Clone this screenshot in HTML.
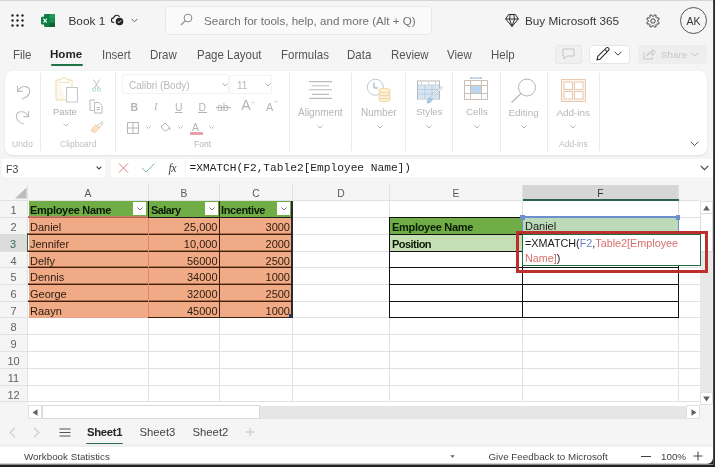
<!DOCTYPE html>
<html><head><meta charset="utf-8">
<style>
*{box-sizing:border-box;margin:0;padding:0}
html,body{width:715px;height:467px;overflow:hidden;background:#f5f5f5;font-family:"Liberation Sans",sans-serif;color:#242424}
.a{position:absolute}
.t{position:absolute;white-space:nowrap;line-height:1}
.tab{font-size:12.1px;color:#555;top:48.6px;transform:scaleX(0.95);transform-origin:0 0}
.rl{font-size:10px;color:#a6a6a6;text-align:center}
.sep{position:absolute;width:1px;background:#ebebeb;top:73px;height:78px}
.ch{position:absolute;font-size:10.3px;color:#5a5a5a;top:189px;text-align:center;line-height:1}
.rh{position:absolute;left:0;width:27px;text-align:center;font-size:11px;color:#616161;line-height:1}
.c{position:absolute;font-size:11px;line-height:1;white-space:nowrap;color:#1a1a1a}
.b{font-weight:bold;letter-spacing:-0.25px}
</style></head><body><div id="root" style="position:absolute;left:0;top:0;width:715px;height:467px;will-change:transform">
<!-- top border -->
<div class="a" style="left:0;top:0;width:715px;height:1px;background:#d6d6d6"></div>

<!-- ===== title bar ===== -->
<!-- waffle -->
<svg class="a" style="left:11px;top:14px" width="14" height="13" viewBox="0 0 14 13">
<g fill="#242424"><circle cx="1.5" cy="1.5" r="1.2"/><circle cx="6.5" cy="1.5" r="1.2"/><circle cx="11.5" cy="1.5" r="1.2"/>
<circle cx="1.5" cy="6.5" r="1.2"/><circle cx="6.5" cy="6.5" r="1.2"/><circle cx="11.5" cy="6.5" r="1.2"/>
<circle cx="1.5" cy="11.5" r="1.2"/><circle cx="6.5" cy="11.5" r="1.2"/><circle cx="11.5" cy="11.5" r="1.2"/></g></svg>
<!-- excel logo -->
<svg class="a" style="left:41px;top:14px" width="14" height="13" viewBox="0 0 14 13">
<rect x="3" y="0" width="11" height="13" rx="1.2" fill="#137a43"/>
<rect x="8.5" y="0" width="5.5" height="13" rx="1" fill="#1f9a58"/>
<rect x="8.5" y="4.3" width="5.5" height="4.4" fill="#178a4c"/>
<rect x="8.5" y="8.7" width="5.5" height="4.3" fill="#0e5f33"/>
<rect x="0" y="2.8" width="8.5" height="7.6" rx="1" fill="#107c41"/>
<path d="M2.4 4.6l3.4 4 M5.8 4.6l-3.4 4" stroke="#e8fff0" stroke-width="1.1"/>
</svg>
<div class="t" style="left:68.5px;top:16px;font-size:11.8px;color:#333">Book 1</div>
<!-- cloud check -->
<svg class="a" style="left:111px;top:13px" width="13" height="13" viewBox="0 0 13 13">
<path d="M3.2 9.5H2.8A2.3 2.3 0 0 1 2.6 4.9 3.2 3.2 0 0 1 8.6 4" fill="none" stroke="#242424" stroke-width="1.2"/>
<circle cx="8.5" cy="8.5" r="3.8" fill="#242424"/>
<path d="M6.8 8.6l1.2 1.1 2.1-2.3" fill="none" stroke="#fff" stroke-width="1"/>
</svg>
<svg class="a" style="left:131px;top:18px" width="7" height="5" viewBox="0 0 7 5"><path d="M0.5 0.8l3 3 3-3" fill="none" stroke="#616161" stroke-width="1"/></svg>
<!-- search -->
<div class="a" style="left:166px;top:7px;width:265px;height:27px;background:#fafafa;border-radius:4px;box-shadow:0 0 0 1px #e8e8e8"></div>
<svg class="a" style="left:180px;top:13px" width="13" height="13" viewBox="0 0 13 13"><circle cx="8" cy="5" r="3.9" fill="none" stroke="#8a8a8a" stroke-width="1"/><path d="M5.2 7.8L1 12" stroke="#8a8a8a" stroke-width="1.1"/></svg>
<div class="t" style="left:204px;top:15px;font-size:11.6px;color:#707070">Search for tools, help, and more (Alt + Q)</div>
<!-- diamond -->
<svg class="a" style="left:504.5px;top:14px" width="14" height="13" viewBox="0 0 14 13"><path d="M3.6 0.5H10.4L13.4 5L7 12.4L0.6 5Z M0.6 5H13.4 M5.3 0.5L4.5 5L7 12.4L9.5 5L8.7 0.5" fill="none" stroke="#2a2a2a" stroke-width="1" stroke-linejoin="round"/></svg>
<div class="t" style="left:525px;top:15px;font-size:11.75px;color:#383838">Buy Microsoft 365</div>
<!-- gear -->
<svg class="a" style="left:646px;top:13.5px" width="14" height="14" viewBox="0 0 14 14"><path d="M8.64 0.81 L10.21 1.47 L9.91 3.31 L10.69 4.09 L12.53 3.79 L13.19 5.36 L11.67 6.45 L11.67 7.55 L13.19 8.64 L12.53 10.21 L10.69 9.91 L9.91 10.69 L10.21 12.53 L8.64 13.19 L7.55 11.67 L6.45 11.67 L5.36 13.19 L3.79 12.53 L4.09 10.69 L3.31 9.91 L1.47 10.21 L0.81 8.64 L2.33 7.55 L2.33 6.45 L0.81 5.36 L1.47 3.79 L3.31 4.09 L4.09 3.31 L3.79 1.47 L5.36 0.81 L6.45 2.33 L7.55 2.33Z" fill="none" stroke="#3a3a3a" stroke-width="0.95" stroke-linejoin="round"/><circle cx="7" cy="7" r="2.2" fill="none" stroke="#3a3a3a" stroke-width="0.95"/></svg>
<!-- avatar -->
<div class="a" style="left:680px;top:7px;width:27px;height:27px;border-radius:50%;border:1px solid #555;background:#f5f5f5"></div>
<div class="t" style="left:680px;top:16px;width:27px;text-align:center;font-size:10.5px;color:#333">AK</div>

<!-- ===== tabs ===== -->
<div class="t tab" style="left:13px">File</div>
<div class="t tab" style="left:50px;top:48.2px;font-weight:bold;color:#242424;transform:none;font-size:11.6px">Home</div>
<div class="a" style="left:50.5px;top:63.5px;width:32px;height:2px;background:#217346;border-radius:1px"></div>
<div class="t tab" style="left:102px">Insert</div>
<div class="t tab" style="left:150px">Draw</div>
<div class="t tab" style="left:197px">Page Layout</div>
<div class="t tab" style="left:281px">Formulas</div>
<div class="t tab" style="left:347px">Data</div>
<div class="t tab" style="left:391px">Review</div>
<div class="t tab" style="left:447px">View</div>
<div class="t tab" style="left:491px">Help</div>
<!-- comment btn -->
<div class="a" style="left:554.5px;top:45px;width:27px;height:19px;border:1px solid #e6e6e6;border-radius:3px;background:#f0f0f0"></div>
<svg class="a" style="left:562px;top:48px" width="13" height="12" viewBox="0 0 13 12"><path d="M1 1h11v7H5l-3 3V8H1z" fill="none" stroke="#c4c4c4" stroke-width="1"/></svg>
<!-- pen btn -->
<div class="a" style="left:589px;top:45px;width:41px;height:19px;border:1px solid #e6e6e6;border-radius:3px;background:#fff"></div>
<svg class="a" style="left:596px;top:47px" width="14" height="14" viewBox="0 0 14 14"><path d="M1 13l.8-3.6L10.2 1a1.5 1.5 0 0 1 2.3 2.3L4.3 11.9z M8.8 2.4l2.3 2.3" fill="none" stroke="#242424" stroke-width="1.05" stroke-linejoin="round"/></svg>
<svg class="a" style="left:614px;top:51px" width="8" height="5" viewBox="0 0 8 5"><path d="M0.5 0.8l3.5 3.3 3.5-3.3" fill="none" stroke="#424242" stroke-width="1"/></svg>
<!-- share btn -->
<div class="a" style="left:638px;top:45px;width:69px;height:19px;border-radius:3px;background:#eeeeee"></div>
<svg class="a" style="left:643px;top:47px" width="13" height="13" viewBox="0 0 13 13"><path d="M1 5v7h8.5V10 M4 9.2c.3-3 2.4-4.7 5.4-4.7V2.2l3 3.2-3 3.2V6.2c-2.4 0-4.3.9-5.4 3z" fill="none" stroke="#c8c8c8" stroke-width="1"/></svg>
<div class="t" style="left:661px;top:49.5px;font-size:9.8px;color:#c6c6c6">Share</div>
<svg class="a" style="left:690.5px;top:51.5px" width="8" height="5" viewBox="0 0 8 5"><path d="M0.5 0.8l3.5 3.3 3.5-3.3" fill="none" stroke="#c6c6c6" stroke-width="1"/></svg>

<!-- ===== ribbon card ===== -->
<div class="a" style="left:5px;top:71px;width:702px;height:84px;background:#fff;border-radius:7px;box-shadow:0 0 1.5px rgba(0,0,0,0.08),0 1px 2px rgba(0,0,0,0.07)"></div>
<!-- Undo group -->
<svg class="a" style="left:8px;top:78px" width="30" height="52" viewBox="0 0 30 52">
<path d="M9.5 8.2V13.4H14.2 M9.6 13.3C11.5 9.8 14.8 8.2 17.8 8.6 21 9.1 22.4 12 21.4 15 20.6 17.3 18 19.6 14.2 21" fill="none" stroke="#bdbdbd" stroke-width="1.1" stroke-linecap="round" stroke-linejoin="round"/>
<path d="M20.6 33.4V38.6H15.9 M20.5 38.5C18.6 35 15.3 33.4 12.3 33.8 9.1 34.3 7.7 37.2 8.7 40.2 9.5 42.5 12.1 44.8 15.4 45.9" fill="none" stroke="#bdbdbd" stroke-width="1.1" stroke-linecap="round" stroke-linejoin="round"/>
</svg>
<div class="t" style="left:12px;top:139.5px;font-size:8.7px;color:#c0c0c0">Undo</div>
<div class="sep" style="left:40px"></div>
<!-- Clipboard -->
<svg class="a" style="left:55px;top:77px" width="24" height="26" viewBox="0 0 24 26">
<path d="M4 2.5h2.5a2.5 2 0 0 1 5 0H14v3H4z" fill="none" stroke="#f2dfb8" stroke-width="1"/>
<path d="M4 3H1v20h10" fill="#fdf8ee" stroke="#f0dcb0" stroke-width="1"/>
<path d="M14 3h3v7" fill="none" stroke="#f0dcb0" stroke-width="1"/>
<rect x="11.5" y="10.5" width="11" height="14.5" fill="#fff" stroke="#c6c6c6" stroke-width="1"/>
</svg>
<div class="t" style="left:53px;top:108px;font-size:9.3px;color:#acacac">Paste</div>
<svg class="a" style="left:63px;top:123px" width="6" height="4" viewBox="0 0 6 4"><path d="M0.5 0.5l2.5 2.5 2.5-2.5" fill="none" stroke="#bdbdbd" stroke-width="1"/></svg>
<svg class="a" style="left:92px;top:79px" width="9" height="13" viewBox="0 0 9 13"><path d="M1.5 0.5l5 8.5 M7.5 0.5l-5 8.5" stroke="#c0c0c0" stroke-width="1" fill="none"/><circle cx="2" cy="10.5" r="1.7" fill="none" stroke="#a9cfd8" stroke-width="1"/><circle cx="7" cy="10.5" r="1.7" fill="none" stroke="#a9cfd8" stroke-width="1"/></svg>
<svg class="a" style="left:89px;top:99px" width="15" height="15" viewBox="0 0 15 15"><path d="M4.5 11.5h-3.5V1h4.5v1" fill="none" stroke="#b9b9b9" stroke-width="1"/><path d="M5.5 3.5h4.5l3 3v7.5H5.5z M7.5 8.5h3.5 M7.5 10.5h3.5" fill="none" stroke="#b9b9b9" stroke-width="1"/></svg>
<svg class="a" style="left:90px;top:121px" width="14" height="12" viewBox="0 0 14 12"><path d="M7 5l5-4.2 1.2 1.2L9 7" fill="none" stroke="#c4c4c4" stroke-width="1"/><path d="M1 9.5L5.5 4l3.5 3.2-4 4.3z" fill="#fbe3c8" stroke="#f0c79a" stroke-width="1"/></svg>
<div class="t" style="left:60px;top:139.5px;font-size:8.5px;color:#c0c0c0">Clipboard</div>
<div class="sep" style="left:115px"></div>
<!-- Font -->
<div class="a" style="left:122px;top:74px;width:107px;height:20px;border:1px solid #f3f3f3;border-radius:2px"></div>
<div class="t" style="left:129px;top:81px;font-size:10px;color:#b8b8b8">Calibri (Body)</div>
<svg class="a" style="left:222px;top:83px" width="6" height="4" viewBox="0 0 6 4"><path d="M0.5 0.5l2.5 2.5 2.5-2.5" fill="none" stroke="#b0b0b0" stroke-width="1"/></svg>
<div class="a" style="left:229px;top:75px;width:43px;height:19px;border:1px solid #f3f3f3;border-radius:2px"></div>
<div class="t" style="left:237px;top:81px;font-size:10px;color:#b8b8b8">11</div>
<svg class="a" style="left:265px;top:83px" width="6" height="4" viewBox="0 0 6 4"><path d="M0.5 0.5l2.5 2.5 2.5-2.5" fill="none" stroke="#b0b0b0" stroke-width="1"/></svg>
<div class="t" style="left:130.5px;top:101.5px;font-size:10.5px;color:#b5b5b5;font-weight:bold">B</div>
<div class="t" style="left:154px;top:101.5px;font-size:10.5px;color:#b5b5b5;font-style:italic;font-family:'Liberation Serif',serif">I</div>
<div class="t" style="left:175px;top:101.5px;font-size:10.5px;color:#b5b5b5;text-decoration:underline">U</div>
<div class="t" style="left:198.5px;top:101.5px;font-size:10.5px;color:#b5b5b5">D</div>
<div class="a" style="left:198px;top:111.5px;width:9px;height:1px;background:#b5b5b5"></div>
<div class="t" style="left:217px;top:101.5px;font-size:10.5px;color:#b5b5b5">ab</div>
<div class="a" style="left:216px;top:106.5px;width:15px;height:1px;background:#b5b5b5"></div>
<div class="t" style="left:241.3px;top:98.3px;font-size:14px;color:#b5b5b5">A</div>
<svg class="a" style="left:251px;top:100.5px" width="4" height="3" viewBox="0 0 4 3"><path d="M0.3 2.5L2 0.6l1.7 1.9" fill="none" stroke="#c4c4c4" stroke-width="0.8"/></svg>
<div class="t" style="left:266px;top:101.5px;font-size:11px;color:#b5b5b5">A</div>
<svg class="a" style="left:273.5px;top:100px" width="4" height="3" viewBox="0 0 4 3"><path d="M0.3 0.5L2 2.4l1.7-1.9" fill="none" stroke="#c4c4c4" stroke-width="0.8"/></svg>
<svg class="a" style="left:127px;top:122px" width="12" height="12" viewBox="0 0 12 12"><path d="M0.5 0.5h11v11h-11z M6 0.5v11 M0.5 6h11" fill="none" stroke="#b5b5b5" stroke-width="1"/></svg>
<svg class="a" style="left:146px;top:126px" width="5" height="3" viewBox="0 0 5 3"><path d="M0.4 0.4l2.1 2.1 2.1-2.1" fill="none" stroke="#b5b5b5" stroke-width="0.9"/></svg>
<svg class="a" style="left:160px;top:122px" width="11" height="10" viewBox="0 0 11 10"><path d="M1 5l4-4 4.5 4.5-3 3.3h-2z M9 5.2c.8 1.2 1.2 2.2 1.2 3" fill="none" stroke="#b5b5b5" stroke-width="1"/></svg>
<svg class="a" style="left:177.5px;top:126px" width="5" height="3" viewBox="0 0 5 3"><path d="M0.4 0.4l2.1 2.1 2.1-2.1" fill="none" stroke="#b5b5b5" stroke-width="0.9"/></svg>
<div class="t" style="left:192px;top:121.5px;font-size:10.5px;color:#b5b5b5">A</div>
<div class="a" style="left:190px;top:132px;width:13px;height:2.5px;background:#e7a3a8"></div>
<svg class="a" style="left:209px;top:126px" width="5" height="3" viewBox="0 0 5 3"><path d="M0.4 0.4l2.1 2.1 2.1-2.1" fill="none" stroke="#b5b5b5" stroke-width="0.9"/></svg>
<div class="t" style="left:194px;top:140px;font-size:8.5px;color:#b3b3b3">Font</div>
<div class="sep" style="left:289px"></div>
<!-- Alignment -->
<svg class="a" style="left:308px;top:80px" width="25" height="20" viewBox="0 0 25 20"><path d="M1 1.6h23 M4 5.7h17 M1 9.7h23 M4 14.4h17 M1 18.4h23" stroke="#bababa" stroke-width="1.1"/></svg>
<div class="t" style="left:298px;top:107.7px;font-size:10px;color:#b6b6b6">Alignment</div>
<svg class="a" style="left:317px;top:124.5px" width="6" height="4" viewBox="0 0 6 4"><path d="M0.5 0.5l2.5 2.5 2.5-2.5" fill="none" stroke="#b5b5b5" stroke-width="1"/></svg>
<div class="sep" style="left:351px"></div>
<!-- Number -->
<svg class="a" style="left:366px;top:78px" width="26" height="25" viewBox="0 0 26 25">
<circle cx="9.3" cy="9.2" r="8" fill="#fff" stroke="#b6cdd8" stroke-width="1"/>
<path d="M8 4.5v5.5h4" fill="none" stroke="#9a9a9a" stroke-width="1"/>
<g fill="#fdf1d6" stroke="#efd39d" stroke-width="1"><ellipse cx="18.5" cy="21.5" rx="5.8" ry="2.2"/><ellipse cx="18.5" cy="18.5" rx="5.8" ry="2.2"/><ellipse cx="18.5" cy="15.5" rx="5.8" ry="2.2"/><ellipse cx="18.5" cy="12.5" rx="5.8" ry="2.2"/></g>
</svg>
<div class="t" style="left:361px;top:107.7px;font-size:10px;color:#b6b6b6">Number</div>
<svg class="a" style="left:376.5px;top:124.5px" width="6" height="4" viewBox="0 0 6 4"><path d="M0.5 0.5l2.5 2.5 2.5-2.5" fill="none" stroke="#b5b5b5" stroke-width="1"/></svg>
<div class="sep" style="left:405px"></div>
<!-- Styles -->
<svg class="a" style="left:416px;top:80px" width="27" height="24" viewBox="0 0 27 24">
<rect x="1.5" y="1" width="22" height="18" fill="#fff" stroke="#b8b8b8" stroke-width="1"/>
<rect x="2" y="5" width="21" height="13.5" fill="#d6e6f5"/>
<path d="M1.5 5h22 M1.5 9.5h22 M1.5 14h22 M9 5v14 M16 5v14" stroke="#b8c8d8" stroke-width="0.8"/>
<path d="M5 3h1 M12 3h1 M19 3h1" stroke="#9a9a9a" stroke-width="1"/>
<path d="M25.5 7.5L15 18" stroke="#c8c8c8" stroke-width="2.4" stroke-linecap="round"/>
<path d="M25.5 7.5L15 18" stroke="#fff" stroke-width="1" stroke-linecap="round"/>
<path d="M14 17l2.5 2.2c-.5 2.3-2.5 3.6-5.5 3.8 .5-2.6 1.2-5 3-6z" fill="#a9cbe6" stroke="#9cbfdc" stroke-width="0.8"/>
</svg>
<div class="t" style="left:416px;top:107.2px;font-size:9.8px;color:#b6b6b6">Styles</div>
<svg class="a" style="left:426px;top:124.5px" width="6" height="4" viewBox="0 0 6 4"><path d="M0.5 0.5l2.5 2.5 2.5-2.5" fill="none" stroke="#b5b5b5" stroke-width="1"/></svg>
<div class="sep" style="left:452px"></div>
<!-- Cells -->
<svg class="a" style="left:464px;top:77px" width="24" height="23" viewBox="0 0 24 23">
<path d="M7 1h10 M7 0v2 M17 0v2" stroke="#8fb0d0" stroke-width="1"/>
<rect x="0.5" y="3.5" width="23" height="19" fill="#fff" stroke="#c9c0b6" stroke-width="1"/>
<rect x="7" y="8.5" width="10" height="8" fill="#bcd6ef"/>
<path d="M0.5 8.5h23 M0.5 16.5h23 M6.5 3.5v19 M17.5 3.5v19" stroke="#c9c0b6" stroke-width="1"/>
</svg>
<div class="t" style="left:466px;top:107.2px;font-size:9.8px;color:#b6b6b6">Cells</div>
<svg class="a" style="left:474px;top:124.5px" width="6" height="4" viewBox="0 0 6 4"><path d="M0.5 0.5l2.5 2.5 2.5-2.5" fill="none" stroke="#b5b5b5" stroke-width="1"/></svg>
<div class="sep" style="left:500px"></div>
<!-- Editing -->
<svg class="a" style="left:510px;top:78px" width="27" height="26" viewBox="0 0 27 26"><circle cx="17" cy="9.5" r="8.5" fill="none" stroke="#b5b5b5" stroke-width="1"/><path d="M11 15.5L1.5 24.5" stroke="#b5b5b5" stroke-width="1.1"/></svg>
<div class="t" style="left:508.5px;top:107.7px;font-size:9.9px;color:#b6b6b6">Editing</div>
<svg class="a" style="left:521px;top:124.5px" width="6" height="4" viewBox="0 0 6 4"><path d="M0.5 0.5l2.5 2.5 2.5-2.5" fill="none" stroke="#b5b5b5" stroke-width="1"/></svg>
<div class="sep" style="left:547px"></div>
<!-- Add-ins -->
<svg class="a" style="left:561px;top:79px" width="25" height="23" viewBox="0 0 25 23"><rect x="0.5" y="0.5" width="24" height="22" fill="#fdf5ee" stroke="#e8c9b0" stroke-width="1"/><rect x="3" y="3" width="8.5" height="7.5" fill="#fff" stroke="#e8c9b0" stroke-width="1"/><rect x="13.5" y="3" width="8.5" height="7.5" fill="#fff" stroke="#e8c9b0" stroke-width="1"/><rect x="3" y="12.5" width="8.5" height="7.5" fill="#fff" stroke="#e8c9b0" stroke-width="1"/><rect x="13.5" y="12.5" width="8.5" height="7.5" fill="#fff" stroke="#e8c9b0" stroke-width="1"/></svg>
<div class="t" style="left:556.5px;top:107.7px;font-size:9.9px;color:#b6b6b6">Add-ins</div>
<svg class="a" style="left:570px;top:124.5px" width="6" height="4" viewBox="0 0 6 4"><path d="M0.5 0.5l2.5 2.5 2.5-2.5" fill="none" stroke="#b5b5b5" stroke-width="1"/></svg>
<div class="t" style="left:559px;top:139.5px;font-size:8.5px;color:#c0c0c0">Add-ins</div>
<div class="sep" style="left:599px"></div>
<svg class="a" style="left:690px;top:140.5px" width="9" height="6" viewBox="0 0 9 6"><path d="M0.7 0.8l3.8 3.8 3.8-3.8" fill="none" stroke="#4a4a4a" stroke-width="1"/></svg>


<!-- ===== formula bar ===== -->


<!-- ===== grid ===== -->
<!--GRID-->
<div class="a" style="left:2px;top:159px;width:103px;height:18px;background:#fff;border-radius:2px"></div>
<div class="t" style="left:6px;top:164px;font-size:10.5px;color:#424242">F3</div>
<svg class="a" style="left:96px;top:166px" width="6" height="4" viewBox="0 0 6 4"><path d="M0.6 0.6l2.4 2.4 2.4-2.4" fill="none" stroke="#424242" stroke-width="1.1"/></svg>
<div class="a" style="left:111px;top:159px;width:74px;height:18px;background:#fff;border-radius:2px"></div>
<svg class="a" style="left:118px;top:163px" width="11" height="10" viewBox="0 0 11 10"><path d="M1 0.5l9 9 M10 0.5l-9 9" stroke="#df7b80" stroke-width="1"/></svg>
<svg class="a" style="left:141px;top:163px" width="14" height="10" viewBox="0 0 14 10"><path d="M0.8 4.8l4.2 4.2 8.4-8.4" fill="none" stroke="#7cb988" stroke-width="1"/></svg>
<div class="t" style="left:168.5px;top:162px;font-size:12px;color:#424242;font-family:'Liberation Serif',serif;font-style:italic;letter-spacing:-0.5px">fx</div>
<div class="a" style="left:186px;top:159px;width:529px;height:18px;background:#fff;"></div>
<div class="t" style="left:189.5px;top:163px;font-size:11.2px;color:#1f1f1f;font-family:'Liberation Mono',monospace">=XMATCH(F2,Table2[Employee Name])</div>
<svg class="a" style="left:699.5px;top:165.3px" width="9" height="6" viewBox="0 0 9 6"><path d="M0.7 0.8l3.8 3.8 3.8-3.8" fill="none" stroke="#424242" stroke-width="1.1"/></svg>
<div class="a" style="left:28px;top:201px;width:672px;height:205px;background:#fff;"></div>
<div class="a" style="left:0px;top:200px;width:700px;height:1px;background:#e1e1e1;"></div>
<div class="a" style="left:0px;top:217px;width:700px;height:1px;background:#e1e1e1;"></div>
<div class="a" style="left:0px;top:234px;width:700px;height:1px;background:#e1e1e1;"></div>
<div class="a" style="left:0px;top:251px;width:700px;height:1px;background:#e1e1e1;"></div>
<div class="a" style="left:0px;top:267px;width:700px;height:1px;background:#e1e1e1;"></div>
<div class="a" style="left:0px;top:284px;width:700px;height:1px;background:#e1e1e1;"></div>
<div class="a" style="left:0px;top:301px;width:700px;height:1px;background:#e1e1e1;"></div>
<div class="a" style="left:0px;top:317px;width:700px;height:1px;background:#e1e1e1;"></div>
<div class="a" style="left:0px;top:334px;width:700px;height:1px;background:#e1e1e1;"></div>
<div class="a" style="left:0px;top:351px;width:700px;height:1px;background:#e1e1e1;"></div>
<div class="a" style="left:0px;top:368px;width:700px;height:1px;background:#e1e1e1;"></div>
<div class="a" style="left:0px;top:385px;width:700px;height:1px;background:#e1e1e1;"></div>
<div class="a" style="left:0px;top:401px;width:700px;height:1px;background:#e1e1e1;"></div>
<div class="a" style="left:27px;top:185px;width:1px;height:216px;background:#e1e1e1;"></div>
<div class="a" style="left:148px;top:185px;width:1px;height:216px;background:#e1e1e1;"></div>
<div class="a" style="left:219px;top:185px;width:1px;height:216px;background:#e1e1e1;"></div>
<div class="a" style="left:292px;top:185px;width:1px;height:216px;background:#e1e1e1;"></div>
<div class="a" style="left:389px;top:185px;width:1px;height:216px;background:#e1e1e1;"></div>
<div class="a" style="left:522px;top:185px;width:1px;height:216px;background:#e1e1e1;"></div>
<div class="a" style="left:678px;top:185px;width:1px;height:216px;background:#e1e1e1;"></div>
<div class="ch" style="left:28px;width:120px">A</div>
<div class="ch" style="left:149px;width:70px">B</div>
<div class="ch" style="left:220px;width:72px">C</div>
<div class="ch" style="left:293px;width:96px">D</div>
<div class="ch" style="left:390px;width:132px">E</div>
<div class="ch" style="left:523px;width:155px">F</div>
<svg class="a" style="left:14px;top:187px" width="13" height="12" viewBox="0 0 13 12"><path d="M12.5 0.5V11.5H1z" fill="#bdbdbd"/></svg>
<div class="rh" style="top:205.2px">1</div>
<div class="rh" style="top:222.2px">2</div>
<div class="rh" style="top:239.2px">3</div>
<div class="rh" style="top:256.2px">4</div>
<div class="rh" style="top:272.2px">5</div>
<div class="rh" style="top:289.2px">6</div>
<div class="rh" style="top:306.2px">7</div>
<div class="rh" style="top:322.2px">8</div>
<div class="rh" style="top:339.2px">9</div>
<div class="rh" style="top:356.2px">10</div>
<div class="rh" style="top:373.2px">11</div>
<div class="rh" style="top:390.2px">12</div>
<div class="a" style="left:523px;top:185px;width:155px;height:14px;background:#d6d6d6;"></div>
<div class="a" style="left:523px;top:198.5px;width:156px;height:2.2px;background:#2e6249;"></div>
<div class="ch" style="left:523px;width:155px;color:#3a3a3a">F</div>
<div class="a" style="left:0px;top:234px;width:26.5px;height:17px;background:#dcdcdc;"></div>
<div class="a" style="left:26.5px;top:233px;width:1.6px;height:19px;background:#2e6b45;"></div>
<div class="rh" style="top:239.2px;color:#3d6b52;width:26px">3</div>
<div class="a" style="left:29px;top:201px;width:263px;height:16px;background:#70ad47;"></div>
<div class="a" style="left:29px;top:217px;width:263px;height:100px;background:#f0ab86;"></div>
<div class="a" style="left:28px;top:233px;width:264px;height:1px;background:#b07050;"></div>
<div class="a" style="left:28px;top:234px;width:264px;height:1px;background:#3e200e;"></div>
<div class="a" style="left:28px;top:250px;width:264px;height:1px;background:#b07050;"></div>
<div class="a" style="left:28px;top:251px;width:264px;height:1px;background:#3e200e;"></div>
<div class="a" style="left:28px;top:266px;width:264px;height:1px;background:#b07050;"></div>
<div class="a" style="left:28px;top:267px;width:264px;height:1px;background:#3e200e;"></div>
<div class="a" style="left:28px;top:283px;width:264px;height:1px;background:#b07050;"></div>
<div class="a" style="left:28px;top:284px;width:264px;height:1px;background:#3e200e;"></div>
<div class="a" style="left:28px;top:300px;width:264px;height:1px;background:#b07050;"></div>
<div class="a" style="left:28px;top:301px;width:264px;height:1px;background:#3e200e;"></div>
<div class="a" style="left:28px;top:216px;width:120px;height:1px;background:#b9866a;"></div>
<div class="a" style="left:28px;top:217px;width:120px;height:1px;background:#c0604c;"></div>
<div class="a" style="left:148px;top:217px;width:144px;height:1px;background:#1d1d1d;"></div>
<div class="a" style="left:29px;top:317px;width:119px;height:1px;background:#e8a08c;"></div>
<div class="a" style="left:148px;top:317px;width:144px;height:1px;background:#3e200e;"></div>
<div class="a" style="left:148px;top:201px;width:1px;height:16px;background:#111;"></div>
<div class="a" style="left:148px;top:218px;width:1px;height:99px;background:#e3826f;"></div>
<div class="a" style="left:218.5px;top:201px;width:1.6px;height:116px;background:#3a2214;"></div>
<div class="a" style="left:291px;top:201px;width:2px;height:117px;background:#2a2a2a;"></div>
<div class="c b" style="left:30px;top:205.0px;color:#0a1a05;letter-spacing:-0.3px">Employee Name</div>
<div class="c b" style="left:151px;top:205.0px;color:#0a1a05;letter-spacing:-0.6px">Salary</div>
<div class="c b" style="left:221px;top:205.0px;color:#0a1a05;letter-spacing:-0.4px">Incentive</div>
<div class="a" style="left:133px;top:202px;width:13px;height:13px;background:#fff;"></div>
<svg class="a" style="left:137px;top:207px" width="6" height="4" viewBox="0 0 6 4"><path d="M0.5 0.5l2.5 2.5 2.5-2.5" fill="none" stroke="#707070" stroke-width="1"/></svg>
<div class="a" style="left:205px;top:202px;width:13px;height:13px;background:#fff;"></div>
<svg class="a" style="left:209px;top:207px" width="6" height="4" viewBox="0 0 6 4"><path d="M0.5 0.5l2.5 2.5 2.5-2.5" fill="none" stroke="#707070" stroke-width="1"/></svg>
<div class="a" style="left:277px;top:202px;width:13px;height:13px;background:#fff;"></div>
<svg class="a" style="left:281px;top:207px" width="6" height="4" viewBox="0 0 6 4"><path d="M0.5 0.5l2.5 2.5 2.5-2.5" fill="none" stroke="#707070" stroke-width="1"/></svg>
<div class="c" style="left:30px;top:221.6px;color:#2b1a0e">Daniel</div>
<div class="c" style="left:149px;width:68.5px;text-align:right;top:221.6px;color:#2b1a0e">25,000</div>
<div class="c" style="left:220px;width:70px;text-align:right;top:221.6px;color:#2b1a0e">3000</div>
<div class="c" style="left:30px;top:238.6px;color:#2b1a0e">Jennifer</div>
<div class="c" style="left:149px;width:68.5px;text-align:right;top:238.6px;color:#2b1a0e">10,000</div>
<div class="c" style="left:220px;width:70px;text-align:right;top:238.6px;color:#2b1a0e">2000</div>
<div class="c" style="left:30px;top:255.6px;color:#2b1a0e">Delfy</div>
<div class="c" style="left:149px;width:68.5px;text-align:right;top:255.6px;color:#2b1a0e">56000</div>
<div class="c" style="left:220px;width:70px;text-align:right;top:255.6px;color:#2b1a0e">2500</div>
<div class="c" style="left:30px;top:271.6px;color:#2b1a0e">Dennis</div>
<div class="c" style="left:149px;width:68.5px;text-align:right;top:271.6px;color:#2b1a0e">34000</div>
<div class="c" style="left:220px;width:70px;text-align:right;top:271.6px;color:#2b1a0e">1000</div>
<div class="c" style="left:30px;top:288.6px;color:#2b1a0e">George</div>
<div class="c" style="left:149px;width:68.5px;text-align:right;top:288.6px;color:#2b1a0e">32000</div>
<div class="c" style="left:220px;width:70px;text-align:right;top:288.6px;color:#2b1a0e">2500</div>
<div class="c" style="left:30px;top:305.6px;color:#2b1a0e">Raayn</div>
<div class="c" style="left:149px;width:68.5px;text-align:right;top:305.6px;color:#2b1a0e">45000</div>
<div class="c" style="left:220px;width:70px;text-align:right;top:305.6px;color:#2b1a0e">1000</div>
<div class="a" style="left:289px;top:314px;width:3px;height:3px;background:#1f3b63;"></div>
<div class="a" style="left:390px;top:218px;width:132px;height:16px;background:#70ad47;"></div>
<div class="a" style="left:390px;top:235px;width:132px;height:16px;background:#c5dfb5;"></div>
<div class="a" style="left:523px;top:218px;width:155px;height:16px;background:#bcd9b8;"></div>
<div class="a" style="left:389px;top:217px;width:290px;height:1px;background:#111;"></div>
<div class="a" style="left:389px;top:234px;width:290px;height:1px;background:#111;"></div>
<div class="a" style="left:389px;top:251px;width:290px;height:1px;background:#111;"></div>
<div class="a" style="left:389px;top:267px;width:290px;height:1px;background:#111;"></div>
<div class="a" style="left:389px;top:284px;width:290px;height:1px;background:#111;"></div>
<div class="a" style="left:389px;top:301px;width:290px;height:1px;background:#111;"></div>
<div class="a" style="left:389px;top:317px;width:290px;height:1px;background:#111;"></div>
<div class="a" style="left:389px;top:217px;width:1px;height:101px;background:#111;"></div>
<div class="a" style="left:522px;top:217px;width:1px;height:101px;background:#111;"></div>
<div class="a" style="left:678px;top:217px;width:1px;height:101px;background:#111;"></div>
<div class="c b" style="left:392px;top:222.0px;color:#0a1a05;letter-spacing:-0.3px">Employee Name</div>
<div class="c b" style="left:392px;top:238.8px;color:#0a1a05;letter-spacing:-0.55px">Position</div>
<div class="c" style="left:525px;top:221.0px;color:#222">Daniel</div>
<div class="a" style="left:522px;top:216px;width:157px;height:1.5px;background:#6d8fd0;"></div>
<div class="a" style="left:521.5px;top:216px;width:1.5px;height:19px;background:#6d8fd0;"></div>
<div class="a" style="left:677.5px;top:216px;width:1.5px;height:19px;background:#6d8fd0;"></div>
<div class="a" style="left:520px;top:215px;width:4.5px;height:4.5px;background:#6d8fd0;"></div>
<div class="a" style="left:675.5px;top:215px;width:4.5px;height:4.5px;background:#6d8fd0;"></div>
<div class="a" style="z-index:5;left:522px;top:234px;width:179px;height:32px;background:#fff;border:1.5px solid #1e6e42"></div>
<div class="c" style="z-index:6;left:525px;top:234.5px;font-size:10.8px;color:#1a1a1a;line-height:16px">=XMATCH(<span style="color:#6585cc">F2</span>,<span style="color:#d86f6c">Table2[Employee</span></div>
<div class="c" style="z-index:6;left:525px;top:249.5px;font-size:10.8px;line-height:16px"><span style="color:#d86f6c">Name]</span><span style="color:#1a1a1a">)</span></div>
<div class="a" style="z-index:7;left:516px;top:231px;width:192px;height:42px;border:3px solid #bd2f2d"></div>
<!--/GRID-->

<!-- ===== bottom ===== -->
<!--BOTTOM-->
<!-- vertical scrollbar -->
<div class="a" style="left:700px;top:201px;width:13px;height:204px;background:#e8e8e8"></div>
<div class="a" style="left:700px;top:213px;width:13px;height:39px;background:#fff;border:1px solid #dcdcdc"></div>
<div class="a" style="left:700px;top:201px;width:13px;height:13px;background:#fff;border:1px solid #e0e0e0"></div>
<svg class="a" style="left:703px;top:205px" width="7" height="6" viewBox="0 0 7 6"><path d="M3.5 0.5L6.8 5.5H0.2z" fill="#616161"/></svg>
<div class="a" style="left:700px;top:392px;width:13px;height:13px;background:#fff;border:1px solid #e0e0e0"></div>
<svg class="a" style="left:703px;top:396px" width="7" height="6" viewBox="0 0 7 6"><path d="M3.5 5.5L6.8 0.5H0.2z" fill="#616161"/></svg>
<!-- horizontal scrollbar -->
<div class="a" style="left:28px;top:405.5px;width:672px;height:13px;background:#e6e6e6"></div>
<div class="a" style="left:28px;top:405px;width:14px;height:14px;background:#fff;border:1px solid #e0e0e0"></div>
<svg class="a" style="left:32px;top:408.5px" width="6" height="7" viewBox="0 0 6 7"><path d="M0.5 3.5L5.5 0.2V6.8z" fill="#616161"/></svg>
<div class="a" style="left:42px;top:405px;width:218px;height:14px;background:#fff;border:1px solid #d8d8d8"></div>
<div class="a" style="left:686px;top:405px;width:14px;height:14px;background:#fff;border:1px solid #e0e0e0"></div>
<svg class="a" style="left:690.5px;top:408.5px" width="6" height="7" viewBox="0 0 6 7"><path d="M5.5 3.5L0.5 0.2V6.8z" fill="#616161"/></svg>
<!-- sheet tabs -->
<svg class="a" style="left:8px;top:426.5px" width="9" height="11" viewBox="0 0 9 11"><path d="M7 0.8L2 5.5l5 4.7" fill="none" stroke="#cdcdcd" stroke-width="1.2"/></svg>
<svg class="a" style="left:32px;top:426.5px" width="9" height="11" viewBox="0 0 9 11"><path d="M2 0.8L7 5.5l-5 4.7" fill="none" stroke="#cdcdcd" stroke-width="1.2"/></svg>
<svg class="a" style="left:59px;top:428px" width="12" height="9" viewBox="0 0 12 9"><path d="M0.5 1h11 M0.5 4.5h11 M0.5 8h11" stroke="#424242" stroke-width="0.9"/></svg>
<div class="t" style="left:87px;top:427px;font-size:11.3px;font-weight:bold;color:#242424;letter-spacing:-0.3px">Sheet1</div>
<div class="a" style="left:86px;top:443.3px;width:37px;height:2.3px;background:#2a6b4a;border-radius:1px"></div>
<div class="t" style="left:139.5px;top:427px;font-size:11.3px;color:#424242">Sheet3</div>
<div class="t" style="left:192.5px;top:427px;font-size:11.3px;color:#424242">Sheet2</div>
<svg class="a" style="left:245px;top:427px" width="10" height="10" viewBox="0 0 10 10"><path d="M5 0.5v9 M0.5 5h9" stroke="#c4c4c4" stroke-width="1"/></svg>
<!-- status bar -->
<div class="a" style="left:0;top:444px;width:713px;height:3px;background:#f0f0f0"></div>
<div class="a" style="left:0;top:447px;width:713px;height:17px;background:#fff"></div>
<div class="t" style="left:24px;top:452px;font-size:9.8px;color:#424242">Workbook Statistics</div>
<svg class="a" style="left:450px;top:455px" width="5" height="3" viewBox="0 0 5 3"><path d="M0.2 0.2h4.6L2.5 2.8z" fill="#616161"/></svg>
<div class="t" style="left:488.5px;top:452px;font-size:9.8px;color:#424242">Give Feedback to Microsoft</div>
<div class="a" style="left:641px;top:456px;width:10px;height:1px;background:#424242"></div>
<div class="t" style="left:661px;top:452px;font-size:9.8px;color:#424242">100%</div>
<svg class="a" style="left:693px;top:451px" width="10" height="10" viewBox="0 0 10 10"><path d="M5 0.5v9 M0.5 5h9" stroke="#424242" stroke-width="1"/></svg>

<!--/BOTTOM-->

<!-- window frame -->
<div class="a" style="left:713px;top:0;width:1px;height:467px;background:#4a4a4a"></div><div class="a" style="left:714px;top:0;width:1px;height:467px;background:#262626"></div>
<div class="a" style="left:0;top:463px;width:713px;height:1px;background:#d2d2d2"></div><div class="a" style="left:0;top:464px;width:713px;height:1px;background:#8a8a8a"></div><div class="a" style="left:0;top:465px;width:715px;height:2px;background:#222"></div><svg class="a" style="left:707px;top:458px;z-index:9" width="6" height="6" viewBox="0 0 6 6"><path d="M6 0V6H0A6 6 0 0 0 6 0z" fill="#262626"/></svg>
</div></body></html>
